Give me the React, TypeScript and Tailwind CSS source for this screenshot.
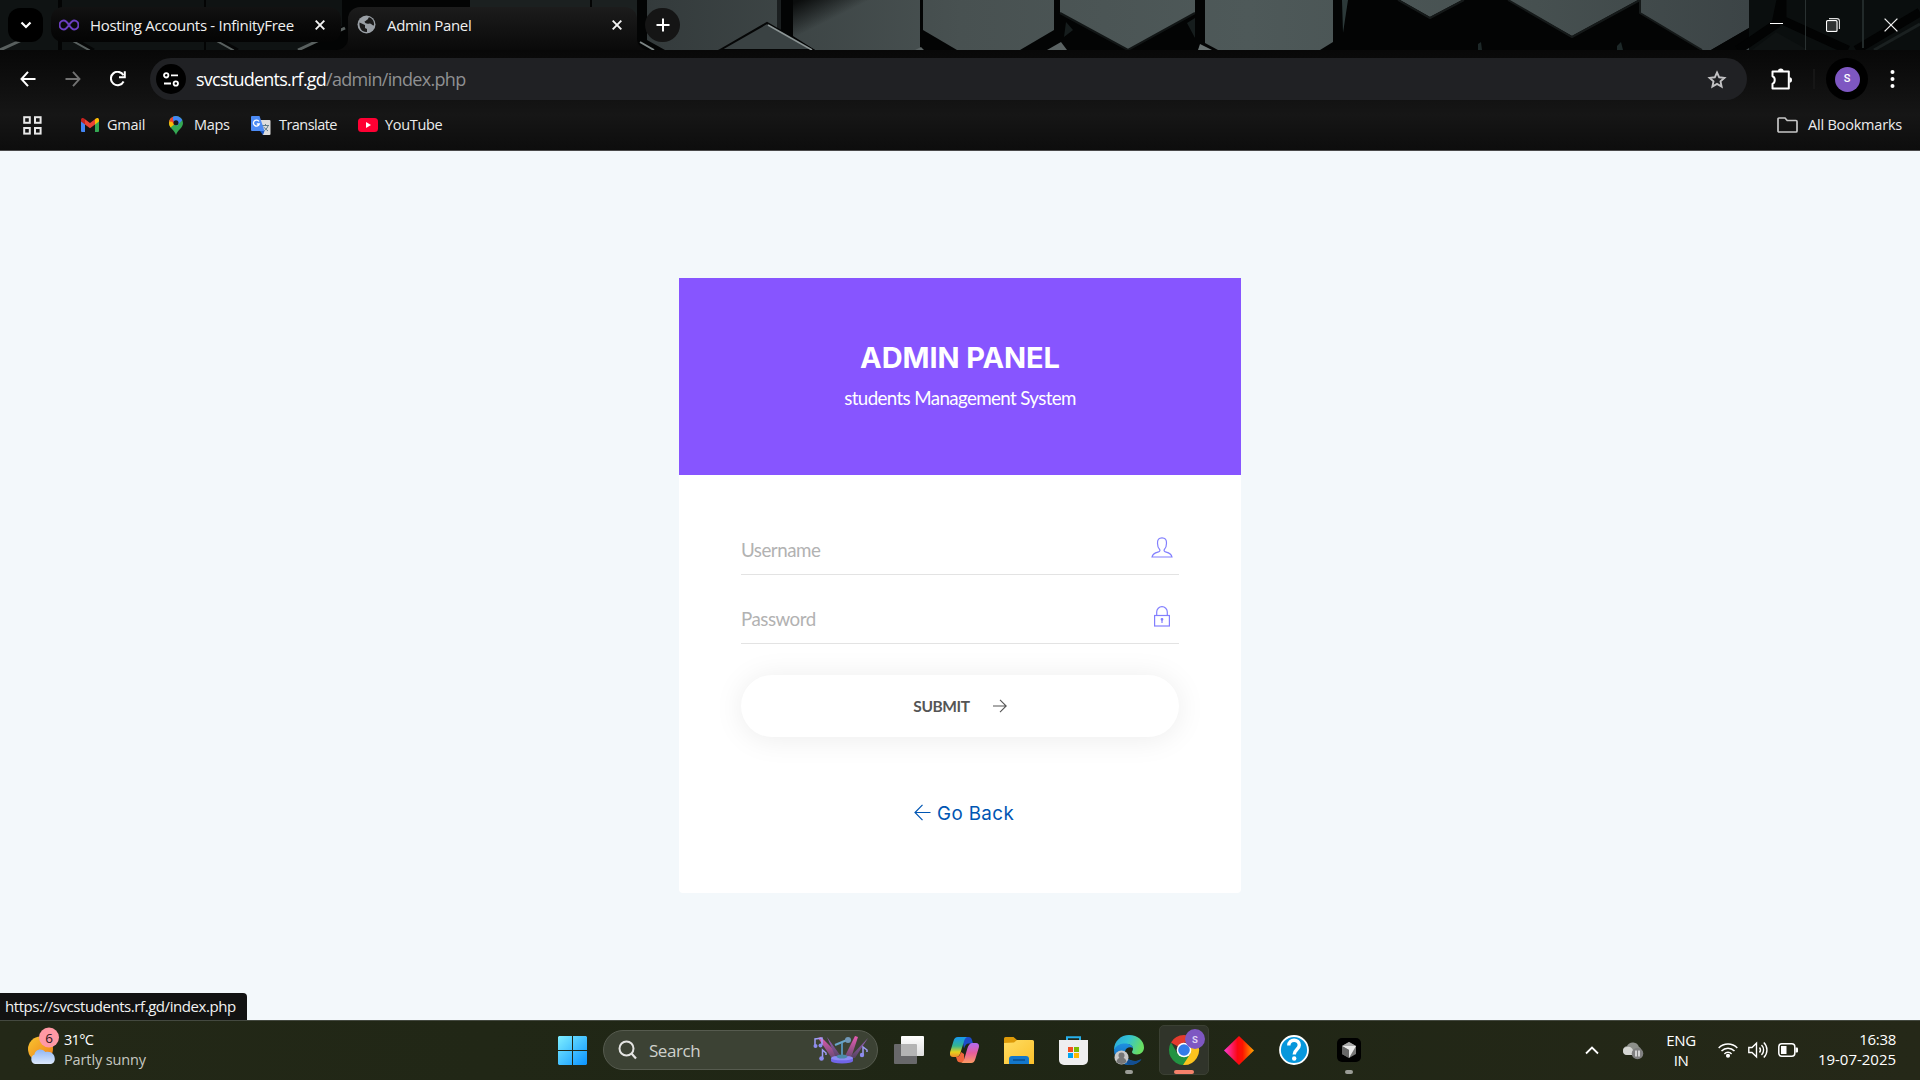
import React from "react";

const UI = "font-['Open_Sans','Noto_Sans',sans-serif] whitespace-nowrap";

function TabStripArt() {
  return (
    <svg className="absolute inset-0" width="1920" height="50" viewBox="0 0 1920 50">
      <defs>
        <linearGradient id="slate" x1="0" x2="1920" y1="0" y2="0" gradientUnits="userSpaceOnUse">
          <stop offset="0" stopColor="#0d1010" />
          <stop offset="0.28" stopColor="#171b1b" />
          <stop offset="0.34" stopColor="#343b3c" />
          <stop offset="0.5" stopColor="#485151" />
          <stop offset="0.65" stopColor="#4e5959" />
          <stop offset="0.8" stopColor="#465050" />
          <stop offset="0.91" stopColor="#3c4446" />
        </linearGradient>
        <linearGradient id="cellShade" x1="800" y1="0" x2="814" y2="28" gradientUnits="userSpaceOnUse">
          <stop offset="0" stopColor="#0b0d0d" />
          <stop offset="1" stopColor="#0b0d0d" stopOpacity="0" />
        </linearGradient>
      </defs>
      <rect width="1920" height="50" fill="#030404" />
      <path d="M0 0H58V50H0zM62 0H204V50H62zM206 0H342V26L300 50H206z" fill="#0f1313" />
      <path d="M470 0H590V50H470zM592 0H637V50H592z" fill="#1b2020" />
      <path d="M0 50L22 40M72 40L90 50M216 40L234 50M298 50L345 28" stroke="#59605f" strokeWidth="3" fill="none" />
      <path d="M76 40L94 50M220 40L238 50" stroke="#050606" strokeWidth="3" fill="none" />
      <path d="M647 0H777V50H665L647 40z" fill="url(#slate)" />
      <path d="M777 0H781V30L777 28z" fill="#1b1f20" />
      <path d="M793 0H920V50H815L793 36z" fill="url(#slate)" />
      <path d="M793 0H920V50H815L793 36z" fill="url(#cellShade)" />
      <path d="M720 50L767 23L813 50z" fill="#3a4243" stroke="#050606" strokeWidth="2" />
      <path d="M768 25L812 50" stroke="#8c9595" strokeWidth="1.6" />
      <path d="M640 42L654 50" stroke="#7c8585" strokeWidth="2" />
      <path d="M923 0H1054V30L1020 50H957L923 30z" fill="url(#slate)" />
      <path d="M915 50L921 47L924 50zM1047 50L1061 42L1067 50z" fill="#5b6363" />
      <path d="M1060 0H1195V13L1128 50L1060 13z" fill="url(#slate)" />
      <path d="M1060 13L1128 50L1195 13" stroke="#111515" strokeWidth="2" fill="none" />
      <path d="M1066 22L1073 30L1064 37zM1187 23L1195 18V38z" fill="#161d1d" />
      <path d="M1205 0H1333V42L1320 50H1218L1205 43z" fill="url(#slate)" />
      <path d="M1200 44L1212 50H1198z" fill="#697272" />
      <path d="M1342 0H1348L1343 33z" fill="#2c3939" />
      <path d="M1400 0H1462L1430 17z" fill="url(#slate)" />
      <path d="M1508 0H1638L1572 36z" fill="url(#slate)" />
      <path d="M1641 0H1749V28L1711 50H1702L1641 13z" fill="url(#slate)" />
      <path d="M1711 50L1749 28V45L1738 50z" fill="#030404" />
      <path d="M1738 50L1749 45V50z" fill="#3c4446" />
      <path d="M1640 0V13L1702 50M1508 0L1572 37L1640 0M1398 0L1430 18L1464 0" stroke="#151919" strokeWidth="2" fill="none" />
      <path d="M1478 44L1481 42L1482 50H1478zM1617 46L1621 42L1623 50H1617z" fill="#1d2828" />
      <rect x="1749" width="171" height="50" fill="#0a0e0e" />
      <path d="M1738 50L1776 24L1781 0M1782 0V20L1848 50" stroke="#020303" strokeWidth="9" fill="none" />
      <path d="M1752 50L1776 32L1808 50z" fill="#0e1212" />
      <path d="M1856 50L1920 12" stroke="#020303" strokeWidth="9" />
      <path d="M1874 50L1920 24" stroke="#1a2020" strokeWidth="3" />
      <path d="M1805.500 0V50" stroke="#2a3131" />
      <path d="M1863 0V48" stroke="#222a2a" strokeWidth="2" />
    </svg>
  );
}

function CloseX({ size = 10 }: { size?: number }) {
  return (
    <svg width={size} height={size} viewBox="0 0 10 10">
      <path d="M0.7 0.7L9.3 9.3M9.3 0.7L0.7 9.3" stroke="#f4f4f4" strokeWidth="1.9" />
    </svg>
  );
}

function TabStrip() {
  return (
    <div className="relative h-[50px] bg-black">
      <TabStripArt />
      <div className="relative flex h-full pt-[7px]">
        <div className="ml-2 mt-[1px] flex h-[34px] w-[35px] items-center justify-center rounded-[12px] bg-black">
          <svg width="12" height="8" viewBox="0 0 12 8" fill="none">
            <path d="M1.5 1.5L6 6L10.5 1.5" stroke="#fff" strokeWidth="2.2" />
          </svg>
        </div>
        <div className="ml-2 flex h-[35px] w-[290px] items-center rounded-[12px] bg-gradient-to-b from-[#121212] to-[#040404] pl-[8px]">
          <svg width="20" height="12" viewBox="0 0 20 12" fill="none">
            <path d="M10 6C8 3 6.800 1.500 4.800 1.500a4.300 4.500 0 0 0 0 9C6.800 10.500 8 9 10 6s3.200-4.500 5.200-4.500a4.300 4.500 0 0 1 0 9C13.200 10.500 12 9 10 6z" stroke="#6c3fc0" strokeWidth="2" />
          </svg>
          <span className={`${UI} ml-[11px] mt-[2px] w-[205px] text-[15px] tracking-[-0.29px] text-[#f0f0f0]`}>Hosting Accounts - InfinityFree</span>
          <span className="ml-[20px]"><CloseX /></span>
        </div>
        <div className="relative ml-[7px] flex h-[43px] w-[289px] items-start rounded-t-[12px] bg-gradient-to-b from-[#1c1c1c] to-[#0a0a0a] pl-[9px]">
          <svg className="absolute -left-3 bottom-0" width="12" height="12" viewBox="0 0 12 12"><path d="M12 0A12 12 0 0 1 0 12H12z" fill="#0b0b0b" /></svg>
          <svg className="absolute -right-3 bottom-0" width="12" height="12" viewBox="0 0 12 12"><path d="M0 0A12 12 0 0 0 12 12H0z" fill="#0b0b0b" /></svg>
          <div className="flex h-[35px] items-center">
            <svg width="19" height="19" viewBox="0 0 19 19">
              <circle cx="9.500" cy="9.500" r="9" fill="#9aa0a6" />
              <path d="M2.500 7.500L8 10v3l2 1v3C5 17.500 2 13 2.500 7.500zM7.500 6.500c2-.5 1.500-1.500 3-2 1-.5.5-2 1.500-2.300 4 1 5.500 5 5 8.300-2 0-2.500-2-4.500-2-2.500.5-4.500 0-5-2z" fill="#1b1b1b" />
            </svg>
            <span className={`${UI} ml-[11px] mt-[2px] w-[84px] text-[15px] tracking-[-0.35px] text-[#f0f0f0]`}>Admin Panel</span>
            <span className="ml-[141px]"><CloseX /></span>
          </div>
        </div>
        <div className="ml-2 mt-[1px] flex h-[34px] w-[35px] items-center justify-center rounded-full bg-[#151515]">
          <svg width="14" height="14" viewBox="0 0 14 14"><path d="M7 0.500V13.500M0.500 7H13.500" stroke="#fff" strokeWidth="2" /></svg>
        </div>
        <div className="ml-auto mr-[22px] mt-[11px] flex items-start">
          <svg className="mt-[5px]" width="13" height="2" viewBox="0 0 13 2"><rect width="13" height="1" fill="#fff" /></svg>
          <svg className="ml-[43px]" width="14" height="14" viewBox="0 0 14 14" fill="none">
            <rect x="0.600" y="2.600" width="10.400" height="10.800" rx="1" stroke="#fff" strokeWidth="1.200" />
            <rect x="2" y="4" width="8" height="8" fill="#303333" />
            <path d="M3 .6H11a2.400 2.400 0 0 1 2.400 2.400V11" stroke="#ddd" strokeWidth="1.100" />
          </svg>
          <svg className="ml-[44px]" width="14" height="14" viewBox="0 0 14 14"><path d="M.6.6L13.400 13.400M13.400.6L.6 13.400" stroke="#eee" strokeWidth="1.300" /></svg>
        </div>
      </div>
    </div>
  );
}

function Toolbar() {
  return (
    <div className="flex h-[58px] items-center">
      <svg className="ml-5" width="16" height="16" viewBox="0 0 16 16" fill="none"><path d="M8 .8L1.500 8L8 15.200M1.500 8H15.500" stroke="#fff" strokeWidth="2" /></svg>
      <svg className="ml-[29px]" width="16" height="16" viewBox="0 0 16 16" fill="none"><path d="M8 .8L14.500 8L8 15.200M14.500 8H.5" stroke="#727272" strokeWidth="1.900" /></svg>
      <svg className="ml-[29px]" width="16" height="16" viewBox="0 0 16 16" fill="none">
        <path d="M13.600 10.500A6.700 6.700 0 1 1 13.500 4.300" stroke="#fff" strokeWidth="2" />
        <path d="M14.800 0.300V6.200H9" stroke="#fff" strokeWidth="2" />
      </svg>
      <div className="ml-6 flex h-[42px] w-[1597px] items-center rounded-full bg-[#202124] pl-[6px]">
        <div className="flex h-[30px] w-[30px] items-center justify-center rounded-full bg-black">
          <svg width="16" height="15" viewBox="0 0 16 15" fill="none" stroke="#fff" strokeWidth="1.800">
            <circle cx="3.200" cy="3.300" r="2.200" /><path d="M8 3.300H15M1 11.500H8" /><circle cx="12.800" cy="11.500" r="2.200" />
          </svg>
        </div>
        <div className={`${UI} ml-[10px] mt-[1px] flex text-[18px]`}>
          <span className="w-[130px] tracking-[-0.76px] text-white">svcstudents.rf.gd</span>
          <span className="tracking-[-0.68px] text-[#8f9092]">/admin/index.php</span>
        </div>
        <svg className="ml-auto mr-[20px]" width="20" height="19" viewBox="0 0 20 19" fill="none">
          <path d="M10 2.500L12.200 7.300L17.400 7.900L13.500 11.400L14.600 16.600L10 13.900L5.400 16.600L6.500 11.400L2.600 7.900L7.800 7.300z" stroke="#c2c2c4" strokeWidth="1.900" />
        </svg>
      </div>
      <svg className="-mt-px ml-6" width="23" height="22" viewBox="0 0 23 22" fill="none">
        <path d="M1.500 3.600H17.800V20.400H1.500V15.800C4.500 14.500 4.500 9.500 1.500 8.300z" stroke="#fff" strokeWidth="2" strokeLinejoin="round" />
        <path d="M7 3a2.800 2.500 0 0 1 5.600 0zM18.500 9.200a2.500 2.800 0 0 1 0 5.600z" fill="#fff" />
      </svg>
      <div className="ml-[19px] h-5 w-[2px] bg-[#161616]" />
      <div className="ml-[11px] flex h-[42px] w-[42px] items-center justify-center rounded-full bg-black">
        <div className="flex h-[25px] w-[25px] items-center justify-center rounded-full bg-[#7e57c2] font-['Roboto',sans-serif] text-[11px] font-medium text-white">S</div>
      </div>
      <svg className="ml-[22px]" width="5" height="18" viewBox="0 0 5 18" fill="#fff"><circle cx="2.500" cy="2" r="2" /><circle cx="2.500" cy="9" r="2" /><circle cx="2.500" cy="16" r="2" /></svg>
    </div>
  );
}

function Bookmarks() {
  const t = `${UI} text-[14.5px] text-[#ececec]`;
  return (
    <div className="flex h-[34px] items-center">
      <svg className="ml-[23px]" width="19" height="19" viewBox="0 0 19 19" fill="none" stroke="#e8e8e8" strokeWidth="2">
        <rect x="1.200" y="1.200" width="5.600" height="5.600" /><rect x="12" y="1.200" width="5.600" height="5.600" />
        <rect x="1.200" y="12" width="5.600" height="5.600" /><rect x="12" y="12" width="5.600" height="5.600" />
      </svg>
      <svg className="ml-[39px]" width="18" height="14" viewBox="0 0 18 14">
        <path d="M0 3V13a1 1 0 0 0 1 1H4V5z" fill="#4285f4" /><path d="M18 3V13a1 1 0 0 1-1 1H14V5z" fill="#34a853" />
        <path d="M4 6.500V1.200L9 5L14 1.200V6.500L9 10.300z" fill="#ea4335" />
        <path d="M0 2C0 0 2 -.5 3.500 .8L4 1.200V6.500L0 3.500z" fill="#c5221f" /><path d="M18 2C18 0 16 -.5 14.500 .8L14 1.200V6.500L18 3.500z" fill="#fbbc04" />
      </svg>
      <span className={`${t} ml-[8px] w-[38px] tracking-[-0.25px]`}>Gmail</span>
      <svg className="ml-[24px]" width="14" height="19" viewBox="0 0 14 19">
        <path d="M7 0a7 7 0 0 1 7 7c0 5-5.500 7-7 12C5.500 14 0 12 0 7a7 7 0 0 1 7-7z" fill="#34a853" />
        <path d="M1.600 2.500L7 7L1.500 11.500C-.6 8.500-.3 5 1.600 2.500z" fill="#fbbc04" />
        <path d="M1.600 2.500A7 7 0 0 1 4 .7L7 7L5 9z" fill="#ea4335" />
        <path d="M0.200 5.500A7 7 0 0 1 1.700 2.500L6 6z" fill="#ea4335" />
        <path d="M4 .7A7 7 0 0 1 13.300 4L8 10L4 4z" fill="#4285f4" />
        <circle cx="7" cy="6.800" r="2.500" fill="#15181c" />
      </svg>
      <span className={`${t} ml-[11px] w-[36px] tracking-[-0.3px]`}>Maps</span>
      <svg className="ml-[21px]" width="20" height="19" viewBox="0 0 20 19">
        <path d="M6 4H18.500a1 1 0 0 1 1 1V18a1 1 0 0 1-1 1H12z" fill="#dedede" />
        <path d="M11 9.500H18M14.500 8V9.500M17 10C16 13 13.500 14.500 12 15.500M12.500 11L17 15" stroke="#607d8b" fill="none" />
        <path d="M1 0H8.500L13.500 15H1a1 1 0 0 1-1-1V1A1 1 0 0 1 1 0z" fill="#4c8bf5" /><path d="M9 15H13.500L12 19z" fill="#1a56c4" />
        <path d="M8 5.500A3 3 0 1 0 8.300 8H5.800" stroke="#fff" strokeWidth="1.300" fill="none" />
      </svg>
      <span className={`${t} ml-[8px] w-[58px] tracking-[-0.55px]`}>Translate</span>
      <svg className="ml-[21px]" width="20" height="14" viewBox="0 0 20 14"><rect width="20" height="14" rx="3.500" fill="#ff0033" /><path d="M8 4L13 7L8 10z" fill="#fff" /></svg>
      <span className={`${t} ml-[7px] tracking-[-0.32px]`}>YouTube</span>
      <svg className="ml-auto" width="21" height="16" viewBox="0 0 21 16" fill="none"><path d="M1 2a1 1 0 0 1 1-1H8L10.200 3.500H19a1 1 0 0 1 1 1V14a1 1 0 0 1-1 1H2a1 1 0 0 1-1-1z" stroke="#c6c6c6" strokeWidth="1.700" /></svg>
      <span className={`${t} ml-[10px] mr-[18px] w-[94px] tracking-[-0.2px]`}>All Bookmarks</span>
    </div>
  );
}

function LoginCard() {
  return (
    <div className="h-[615px] w-[562px] rounded-b-[4px] bg-white">
      <div className="flex h-[197px] flex-col items-center bg-[#8755ff] text-white">
        <h1 className="mt-[60px] h-[40px] whitespace-nowrap font-['Inter',sans-serif] text-[29px] font-bold leading-[40px] tracking-[-0.1px]">ADMIN PANEL</h1>
        <p className="mt-[6px] whitespace-nowrap font-['Lato',sans-serif] text-[18.75px] leading-[28px] tracking-[-0.63px]">students Management System</p>
      </div>
      <div className="flex flex-col px-[62px] pt-[44px]">
        <div className="flex h-[56px] items-center justify-between border-b border-[#e3e3e3] pr-[6px]">
          <span className="mt-[8px] font-['Lato',sans-serif] text-[18.75px] tracking-[-0.5px] text-[#b2b2b2]">Username</span>
          <svg className="mt-[1px]" width="22" height="21" viewBox="0 0 22 21" fill="none">
            <path d="M8.800 12.700C7.500 11.500 6.500 9 6.500 6.200C6.300 2.600 8 .9 11 .9s4.700 1.700 4.500 5.300c0 2.800-1 5.300-2.300 6.500c-.5 1.200.3 2 2 2.400c3.200.8 5.200 2 5.800 4.900H1c.6-2.900 2.600-4.100 5.800-4.900c1.700-.4 2.500-1.200 2-2.400z" stroke="#827ffe" strokeWidth="1.200" />
          </svg>
        </div>
        <div className="mt-[13px] flex h-[56px] items-center justify-between border-b border-[#e3e3e3] pr-[9px]">
          <span className="mt-[8px] font-['Lato',sans-serif] text-[18.75px] tracking-[-0.5px] text-[#b2b2b2]">Password</span>
          <svg className="mt-[1px]" width="16" height="21" viewBox="0 0 16 21" fill="none" stroke="#827ffe" strokeWidth="1.200">
            <rect x=".6" y="9.500" width="14.800" height="10.500" /><path d="M2.700 9.500V6a5.300 5.300 0 0 1 10.600 0V9.500" />
            <path d="M8 13V17" /><circle cx="8" cy="13.300" r=".8" fill="#827ffe" />
          </svg>
        </div>
        <button className="mt-[31px] flex h-[62px] items-center justify-center rounded-full bg-white shadow-[0_2px_30px_rgba(0,0,0,0.08)]">
          <span className="mt-[2px] whitespace-nowrap font-['Lato',sans-serif] text-[15.5px] font-bold tracking-[-0.4px] text-[#555]">SUBMIT</span>
          <svg className="ml-[23px] -mt-px" width="14" height="14" viewBox="0 0 14 14" fill="none"><path d="M7 .8L13.200 7L7 13.200M0 7H13" stroke="#555" strokeWidth="1.100" /></svg>
        </button>
        <a className="ml-[173px] mt-[63px] flex h-[28px] items-center text-[#0056b3]">
          <svg className="-mt-[3px]" width="17" height="17" viewBox="0 0 17 17" fill="none"><path d="M8.500 .8L1 8.500L8.500 16.200M1 8.500H16.500" stroke="#0056b3" strokeWidth="1.200" /></svg>
          <span className="ml-[6px] whitespace-nowrap font-['Inter',sans-serif] text-[18.75px] tracking-[0.4px]">Go Back</span>
        </a>
      </div>
    </div>
  );
}

function TaskCell({ children, active, dot }: { children: React.ReactNode; active?: boolean; dot?: boolean }) {
  return (
    <div className={`relative flex h-[50px] w-[50px] items-center justify-center rounded-[5px] ${active ? "border border-[#3b4033] bg-[#30342a]" : ""}`}>
      {children}
      {dot && <div className="absolute bottom-[1px] left-[21px] h-[4px] w-[8px] rounded-full bg-[#9a9c96]" />}
      {active && <div className="absolute bottom-0 left-[14px] h-[4px] w-[20px] rounded-full bg-[#f5826b]" />}
    </div>
  );
}

function SearchArt() {
  return (
    <svg width="56" height="28" viewBox="0 0 56 28" fill="none">
      <defs>
        <linearGradient id="beam" x1="0" y1="0" x2="0" y2="1"><stop stopColor="#e85bb2" /><stop offset="1" stopColor="#694a72" /></linearGradient>
        <linearGradient id="beam2" x1="0" y1="0" x2="0" y2="1"><stop stopColor="#9b62bf" /><stop offset="1" stopColor="#58425f" /></linearGradient>
      </defs>
      <path d="M5 2L8 1L28 21H18zM45 1L42 0L32 20L38 22z" fill="url(#beam)" />
      <path d="M14 1L27 19L23 22zM55 2L36 22H42z" fill="url(#beam2)" />
      <path d="M22 9L34 4" stroke="#69a5c9" strokeWidth="2" /><path d="M29 7V22" stroke="#568eaf" strokeWidth="2" />
      <circle cx="35" cy="4" r="3" fill="#7198b8" />
      <path d="M18 22V25A11 2.500 0 0 0 40 25V22z" fill="#7165e8" /><ellipse cx="29" cy="22" rx="11" ry="2.300" fill="#8d8cf5" />
      <ellipse cx="29" cy="20.500" rx="5.500" ry="2" fill="#4d8aa8" />
      <g stroke="#9e9cf5" strokeWidth="1.500"><path d="M2 10V3L9 2V9M9.500 23V14L13 17V19M50 19V11L54 14V16" /></g>
      <g fill="#8e8cf0"><circle cx="2.500" cy="10" r="2" /><circle cx="7.500" cy="9.500" r="2" /><circle cx="8.500" cy="22.500" r="2.300" /><circle cx="49" cy="19" r="2.200" /></g>
    </svg>
  );
}

function Taskbar() {
  return (
    <div className="flex h-[60px] items-center border-t border-[#444940] bg-gradient-to-r from-[#232817] via-[#1f2615] to-[#252818] pb-[1px] text-white">
      <div className="flex w-[547px] items-center pl-[28px]">
        <svg className="-mt-[8px]" width="32" height="38" viewBox="0 0 32 38">
          <defs>
            <linearGradient id="sun" x1="0" y1="0" x2="1" y2="1"><stop stopColor="#f8c531" /><stop offset="1" stopColor="#ef7d16" /></linearGradient>
            <linearGradient id="cloud" x1="0" y1="0" x2="0" y2="1"><stop stopColor="#8fb6f4" /><stop offset="1" stopColor="#dce8fb" /></linearGradient>
          </defs>
          <circle cx="12.500" cy="22" r="12.500" fill="url(#sun)" />
          <path d="M7 37a5 5 0 0 1-.5-9.500C7 23 13 20 17.500 25C23 23.500 27 27.500 26.800 32c0 3-2 5-5 5z" fill="url(#cloud)" />
          <circle cx="21" cy="10.500" r="10" fill="#ff99a4" />
          <text x="21" y="15.500" textAnchor="middle" fontSize="13.500" fontFamily="Open Sans" fill="#2a1518">6</text>
        </svg>
        <div className={`${UI} ml-[4px] text-[14.5px] leading-[20px]`}>
          <div className="tracking-[-0.7px]">31°C</div>
          <div className="tracking-[-0.12px] text-[#c6c8c2]">Partly sunny</div>
        </div>
      </div>
      <TaskCell>
        <svg width="29" height="29" viewBox="0 0 29 29">
          <defs><linearGradient id="win" x1="0" y1="0" x2="29" y2="29" gradientUnits="userSpaceOnUse"><stop stopColor="#7fefff" /><stop offset="1" stopColor="#0a93ff" /></linearGradient></defs>
          <path d="M1 0H14V14H0V1zM15 0H28L29 1V14H15zM0 15H14V29H1L0 28zM15 15H29V28L28 29H15z" fill="url(#win)" />
        </svg>
      </TaskCell>
      <div className="ml-[6px] flex h-[40px] w-[275px] items-center rounded-full border border-[#565b4f] bg-[#3c4234] pl-[14px]">
        <svg width="19" height="20" viewBox="0 0 19 20" fill="none"><circle cx="8.500" cy="8.500" r="7" stroke="#e4e4e2" strokeWidth="2" /><path d="M13.500 13.500L18 18.500" stroke="#e4e4e2" strokeWidth="2.200" /></svg>
        <span className={`${UI} ml-[12px] mt-[1px] w-[52px] text-[17px] tracking-[-0.45px] text-[#cfd1cc]`}>Search</span>
        <span className="ml-auto mr-[8px]"><SearchArt /></span>
      </div>
      <div className="ml-[6px] flex gap-[5px]">
        <TaskCell>
          <svg width="30" height="28" viewBox="0 0 30 28">
            <defs><linearGradient id="tv" x1="0" y1="0" x2="0" y2="1"><stop stopColor="#fff" /><stop offset="1" stopColor="#dedede" /></linearGradient></defs>
            <rect y="8" width="23" height="20" rx="1" fill="#68686a" /><rect x="7" y="0" width="23" height="20" rx="1" fill="url(#tv)" /><path d="M7 8H22a1 1 0 0 1 1 1V20H7z" fill="#b4b4b4" />
          </svg>
        </TaskCell>
        <TaskCell>
          <svg width="29" height="26" viewBox="0 0 29 26">
            <defs>
              <linearGradient id="cpA" x1="0" y1="0" x2="0" y2="1"><stop stopColor="#1697ee" /><stop offset=".45" stopColor="#35b58f" /><stop offset=".75" stopColor="#e5d21c" /><stop offset="1" stopColor="#ef8b2b" /></linearGradient>
              <linearGradient id="cpB" x1="0" y1="0" x2="0" y2="1"><stop stopColor="#b16bf2" /><stop offset=".5" stopColor="#e75d9c" /><stop offset="1" stopColor="#fb9a63" /></linearGradient>
            </defs>
            <path d="M12 0H18.500c2 0 3 1 3.500 3l1 3.500H19c-3 0-4 2-5 5z" fill="#1d4bc9" />
            <path d="M8 0H17c-2 1-2.800 3-3.500 6L11 14c-1 4-2.500 6-5 6H3c-3 0-3.500-2.500-2.700-5.500L3.500 4C4.300 1.500 5.500 0 8 0z" fill="url(#cpA)" />
            <path d="M6 20c3 0 4-2 5-5l3 2L14.500 25C9 26 7.500 25 7 23z" fill="#f0663a" />
            <path d="M21 26H11c2.500-1 3-3 4-6.500L17.500 11C18.500 8 20 6 22.500 6H26c3 0 3.400 2.500 2.700 5L25.500 21.500C24.700 24.500 23.500 26 21 26z" fill="url(#cpB)" />
          </svg>
        </TaskCell>
        <TaskCell>
          <svg width="30" height="27" viewBox="0 0 30 27">
            <defs><linearGradient id="fold" x1="0" y1="0" x2="1" y2="1"><stop stopColor="#ffdd62" /><stop offset="1" stopColor="#fbc02b" /></linearGradient></defs>
            <path d="M0 1.500A1.500 1.500 0 0 1 1.500 0H9.500L13 3V9H0z" fill="#dd9a08" /><path d="M0 6L10 5.500L13 3H28.500A1.500 1.500 0 0 1 30 4.500V27H0z" fill="url(#fold)" />
            <path d="M5 27V22a3 3 0 0 1 3-3H22a3 3 0 0 1 3 3V27z" fill="#1377cb" /><path d="M9 23H21" stroke="#0a4c8d" strokeWidth="1.500" />
          </svg>
        </TaskCell>
        <TaskCell>
          <svg className="-ml-px" width="29" height="29" viewBox="0 0 29 29">
            <path d="M8 6V1.200H21V6" stroke="#27b0ea" strokeWidth="2" fill="none" /><path d="M0 4H29V24a5 5 0 0 1-5 5H5a5 5 0 0 1-5-5z" fill="#eeeeef" />
            <path d="M9 11H14V16H9z" fill="#f25022" /><path d="M15 11H20V16H15z" fill="#7fba00" /><path d="M9 17H14V22H9z" fill="#00a4ef" /><path d="M15 17H20V22H15z" fill="#ffb900" />
          </svg>
        </TaskCell>
        <TaskCell dot>
          <svg width="30" height="30" viewBox="0 0 30 30">
            <defs>
              <linearGradient id="edgeA" x1="0" y1="0" x2="1" y2=".3"><stop stopColor="#2aa5dc" /><stop offset=".5" stopColor="#33c3d4" /><stop offset="1" stopColor="#68de63" /></linearGradient>
              <linearGradient id="edgeB" x1="0" y1="0" x2="0" y2="1"><stop stopColor="#1f8fe0" /><stop offset="1" stopColor="#0c62b5" /></linearGradient>
            </defs>
            <path d="M0 15C0 6 7 0 15 0c9 0 15 6 15 12.500c0 4-3 7-7 7c-3 0-5-1-5-2.500c0-1 1-1.500 1-3.500C19 11 16 9 12 9C6 9 2 12 0 15z" fill="url(#edgeA)" />
            <path d="M0 15C2 10 7 8.500 11 8.500c5 0 8 2.500 8 5c-1.500-2-7-2-8 3c-1 6 5 10 11 9.500c2 0 4-.8 5-1.300C24.500 28 20 30 15 30C6 30 0 23 0 15z" fill="url(#edgeB)" />
            <path d="M11 17c-.5 6 5 9.500 11 9l5.500-2C25 28 20 30 15 30C11 28 9 22 11 17z" fill="#134e91" />
            <circle cx="7.500" cy="22.500" r="7" fill="#c9c9c9" /><circle cx="7.500" cy="20.500" r="3" fill="#777" /><path d="M2.500 27a5 4.500 0 0 1 10 0A7 7 0 0 1 2.500 27z" fill="#777" />
          </svg>
        </TaskCell>
        <TaskCell active>
          <svg className="overflow-visible" width="30" height="30" viewBox="0 0 30 30">
            <path d="M15 15L2 7.500A15 15 0 0 1 28 7.500H15z" fill="#e33b2e" /><path d="M15 15L28 7.500A15 15 0 0 1 14 30z" fill="#fcc31e" /><path d="M2 7.500A15 15 0 0 0 14 30L21.500 18.500L15 15L8.500 18.500z" fill="#229342" />
            <circle cx="15" cy="15" r="7.300" fill="#fff" /><circle cx="15" cy="15" r="5.800" fill="#337bea" />
            <circle cx="26" cy="4" r="10" fill="#7e57c2" /><text x="26" y="7.500" textAnchor="middle" fontFamily="Roboto" fontWeight="700" fontSize="9.500" fill="#ddd0f2">S</text>
          </svg>
        </TaskCell>
        <TaskCell>
          <svg width="30" height="29" viewBox="0 0 30 29">
            <defs><linearGradient id="dia"><stop stopColor="#fd3ad6" /><stop offset=".45" stopColor="#fb0713" /><stop offset=".62" stopColor="#fb1500" /><stop offset="1" stopColor="#ffa600" /></linearGradient></defs>
            <path d="M15 0L30 14.500L15 29L0 14.500z" fill="url(#dia)" />
          </svg>
        </TaskCell>
        <TaskCell>
          <svg width="30" height="30" viewBox="0 0 30 30">
            <circle cx="15" cy="15" r="14" fill="#0797dc" stroke="#fff" strokeWidth="1.800" />
            <path d="M9.800 10.500C9.800 3.500 20.300 3.500 20.300 10c0 4.500-5.100 4.500-5.100 9.500" stroke="#fff" strokeWidth="3.400" fill="none" /><circle cx="15.200" cy="23.500" r="2.200" fill="#fff" />
          </svg>
        </TaskCell>
        <TaskCell dot>
          <svg width="24" height="24" viewBox="0 0 24 24">
            <rect width="24" height="24" rx="5" fill="#000" /><path d="M12 4L19 8V16L12 20L5 16V8z" fill="#777" /><path d="M12 4L19 8L12 9L5 8z" fill="#aaa" /><path d="M5 8H19L12 20V12z" fill="#e8e8e8" /><path d="M5 8L12 12V20L5 16z" fill="#666" />
          </svg>
        </TaskCell>
      </div>
      <div className="ml-auto mr-[24px] flex items-center">
        <svg width="14" height="9" viewBox="0 0 14 9" fill="none"><path d="M1 7.500L7 1.500L13 7.500" stroke="#fff" strokeWidth="1.800" /></svg>
        <svg className="ml-[24px] mt-[2px]" width="21" height="18" viewBox="0 0 21 18">
          <path d="M5 13a4.500 4.500 0 0 1-1-9a6.500 6.500 0 0 1 12 1c3 1 3 7 0 8z" fill="#8d8f8a" /><path d="M4 13a4 4 0 0 1 0-8c3-1 5 1 6 3l3 5z" fill="#d5d6d3" />
          <circle cx="14.500" cy="11.500" r="5.800" fill="#808080" /><path d="M13 8.500V14.500M16 8.500V14.500" stroke="#fff" strokeWidth="1.300" />
        </svg>
        <div className={`${UI} -mt-px ml-[22px] w-[30px] text-center text-[15px] leading-[20px] tracking-[-0.4px]`}><div>ENG</div><div>IN</div></div>
        <svg className="ml-[22px]" width="20" height="16" viewBox="0 0 20 16" fill="none" stroke="#fff" strokeWidth="1.500">
          <path d="M.7 6A13 13 0 0 1 19.300 6M3.500 9A9 9 0 0 1 16.500 9M6.400 11.900A5 5 0 0 1 13.600 11.900" /><circle cx="10" cy="13.800" r="1.300" fill="#fff" />
        </svg>
        <svg className="ml-[10px]" width="20" height="18" viewBox="0 0 20 18" fill="none" stroke="#fff" strokeWidth="1.400">
          <path d="M.8 6.500H4L8.500 2.200V15.800L4 11.500H.8z" /><path d="M11.500 6.500A4 4 0 0 1 11.500 11.500M13.500 4A7 7 0 0 1 13.500 14M15.800 1.500A10.500 10.500 0 0 1 15.800 16.500" />
        </svg>
        <svg className="ml-[10px]" width="20" height="14" viewBox="0 0 20 14"><rect x=".8" y=".8" width="16" height="12.400" rx="3" fill="none" stroke="#fff" strokeWidth="1.500" /><rect x="3" y="3" width="5.500" height="8" fill="#fff" /><path d="M17.500 4.500H19a1 1 0 0 1 1 1V8.500a1 1 0 0 1-1 1H17.500z" fill="#fff" /></svg>
        <div className={`${UI} -mt-[2px] ml-[20px] w-[78px] text-right text-[15px] leading-[20px]`}><div className="tracking-[-0.3px]">16:38</div><div className="-ml-2 tracking-[-0.02px]">19-07-2025</div></div>
      </div>
    </div>
  );
}

export default function App() {
  return (
    <div className="flex h-[1080px] w-[1920px] flex-col overflow-hidden bg-[#f3f8fb]">
      <TabStrip />
      <div className="h-[101px] border-b border-[#4a4a4a] bg-gradient-to-b from-[#080808] via-[#161616] via-65% to-[#0d0d0d]">
        <Toolbar />
        <Bookmarks />
      </div>
      <main className="relative flex flex-1 justify-center pt-[127px]">
        <LoginCard />
        <div className={`${UI} absolute bottom-0 left-0 flex h-[27px] w-[247px] items-center rounded-tr-[4px] bg-[#121212] pl-[5px] text-[15px] tracking-[-0.43px] text-[#f2f2f2]`}>https://svcstudents.rf.gd/index.php</div>
      </main>
      <Taskbar />
    </div>
  );
}
